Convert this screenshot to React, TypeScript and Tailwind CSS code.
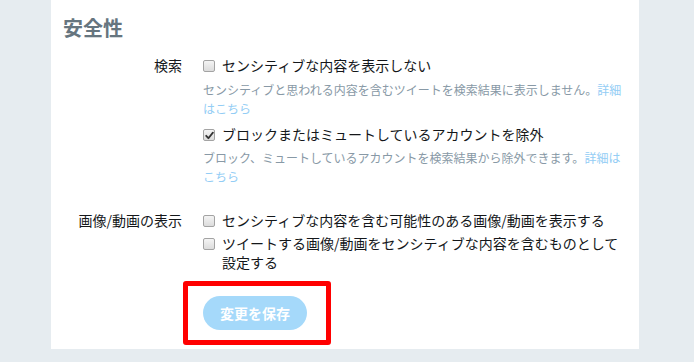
import React from 'react';

const font = { fontFamily: '"Noto Sans CJK JP", "Noto Sans", sans-serif' };

const Box = ({ checked }: { checked?: boolean }) => (
  <span className="mt-[4px] w-[12px] h-[12px] shrink-0 rounded-[2px] border border-[#a3a3a3] bg-gradient-to-b from-[#f4f4f4] to-[#dcdcdc] flex items-center justify-center">
    {checked && (
      <svg width="9" height="9" viewBox="0 0 9 9">
        <path d="M1.2 4.8 L3.4 7.2 L7.9 1.6" fill="none" stroke="#333" strokeWidth="1.8" strokeLinecap="round" strokeLinejoin="round" />
      </svg>
    )}
  </span>
);

const Check = ({ label, checked }: { label: string; checked?: boolean }) => (
  <label className="flex items-start gap-[7px] text-[14px] leading-[19px] text-[#14171a]">
    <Box checked={checked} />
    <span>{label}</span>
  </label>
);

const Desc = ({ text }: { text: string }) => (
  <p className="text-[12px] leading-[19px] text-[#8899a6]">
    {text}
    <a className="text-[#93cdf5]">詳細はこちら</a>
  </p>
);

const App: React.FC = () => {
  return (
    <div className="min-h-screen bg-[#e6ecf0] pl-[51px]" style={font}>
      <div className="w-[588px] bg-white px-[12px] pt-[14px] pb-[19px]">
        <h2 className="text-[20px] leading-[28px] font-bold text-[#66757f]">安全性</h2>

        {/* 検索 */}
        <div className="flex mt-[14px]">
          <div className="w-[119px] text-right text-[14px] leading-[19px] text-[#14171a]">検索</div>
          <div className="ml-[21px] w-[424px]">
            <Check label="センシティブな内容を表示しない" />
            <div className="mt-[5px]">
              <Desc text="センシティブと思われる内容を含むツイートを検索結果に表示しません。" />
            </div>
            <div className="mt-[7px]">
              <Check label="ブロックまたはミュートしているアカウントを除外" checked />
            </div>
            <div className="mt-[4px]">
              <Desc text="ブロック、ミュートしているアカウントを検索結果から除外できます。" />
            </div>
          </div>
        </div>

        {/* 画像/動画の表示 */}
        <div className="flex mt-[25px]">
          <div className="w-[119px] text-right text-[14px] leading-[19px] text-[#14171a]">画像/動画の表示</div>
          <div className="ml-[21px] w-[424px] flex flex-col gap-[4px]">
            <Check label="センシティブな内容を含む可能性のある画像/動画を表示する" />
            <Check label="ツイートする画像/動画をセンシティブな内容を含むものとして設定する" />
          </div>
        </div>

        <div className="flex mt-[24px] pl-[140px]">
          <div className="relative">
            <button className="h-[34px] w-[104px] rounded-full bg-[#a5d9fa] text-white text-[14px] font-bold">
              変更を保存
            </button>
            <div className="absolute -left-[20px] -right-[24px] -top-[15px] -bottom-[15px] border-[5px] border-[#ff0000] rounded-[3px] pointer-events-none" />
          </div>
        </div>
      </div>
    </div>
  );
};

export default App;
